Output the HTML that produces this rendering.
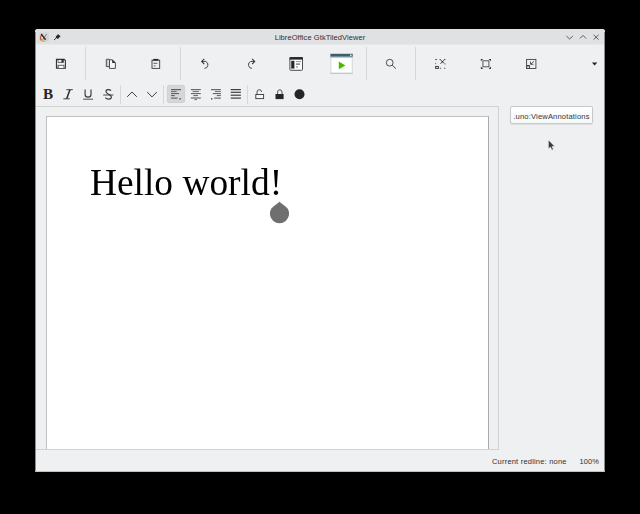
<!DOCTYPE html>
<html>
<head>
<meta charset="utf-8">
<title>LibreOffice GtkTiledViewer</title>
<style>
html,body{margin:0;padding:0;}
body{width:640px;height:514px;background:#000;position:relative;overflow:hidden;font-family:"Liberation Sans",sans-serif;}
.abs{position:absolute;}
#win{left:35px;top:29px;width:570px;height:443px;background:#eff0f1;border-radius:3px 3px 0 0;overflow:hidden;}
#title{left:0;top:0;width:570px;height:15px;background:#dfe1e3;}
#titlefade{left:0;top:15px;width:570px;height:1px;background:#e7e8ea;}
#ttext{left:0;width:570px;top:3px;text-align:center;font-size:7.5px;letter-spacing:0.08px;color:#2e3236;line-height:11px;white-space:nowrap;}
.sep{width:1px;background:#d5d7d9;}
#scrolltop{left:1px;top:77px;width:463px;height:1px;background:#d0d2d4;}
#scrollright{left:463px;top:77px;width:1px;height:344px;background:#d0d2d4;}
#scrollbot{left:1px;top:420px;width:463px;height:1px;background:#d0d2d4;}
#doc{left:11px;top:87px;width:443px;height:333px;background:#fff;border-left:1px solid #bdbfc1;border-top:1px solid #bdbfc1;border-right:1px solid #a9abad;box-sizing:border-box;}
#hello{left:55px;top:131.6px;font-family:"Liberation Serif",serif;font-size:37.4px;color:#000;line-height:44px;white-space:nowrap;will-change:transform;}
#bold{left:7.9px;top:57.2px;font-family:"Liberation Serif",serif;font-weight:bold;font-size:15.2px;line-height:16px;color:#25282b;}
#btn{left:475px;top:77px;width:83px;height:18px;border:1px solid #c6c8ca;border-radius:2px;background:linear-gradient(#ffffff,#f6f7f7);box-shadow:0 1px 1px rgba(0,0,0,0.08);box-sizing:border-box;font-size:7.6px;letter-spacing:0.15px;color:#33373b;text-align:center;line-height:19px;white-space:nowrap;}
#status span{position:absolute;font-size:7.5px;color:#2e3236;line-height:10px;white-space:nowrap;}
#leftedge{left:0;top:3px;width:1px;height:440px;background:#8d8e8f;}
#rightedge{left:569px;top:3px;width:1px;height:440px;background:#8d8e8f;}
#botedge{left:0;top:442px;width:570px;height:1px;background:#c0c1c2;}
#icons{position:absolute;left:0;top:0;width:640px;height:514px;}
</style>
</head>
<body>
<div id="win" class="abs">
  <div id="title" class="abs"></div>
  <div id="titlefade" class="abs"></div>
  <div id="ttext" class="abs">LibreOffice GtkTiledViewer</div>
  <div id="leftedge" class="abs"></div><div id="rightedge" class="abs"></div><div id="botedge" class="abs"></div>

  <div class="sep abs" style="left:50px;top:18px;height:33px;"></div>
  <div class="sep abs" style="left:145px;top:18px;height:33px;"></div>
  <div class="sep abs" style="left:331px;top:18px;height:33px;"></div>
  <div class="sep abs" style="left:380px;top:18px;height:33px;"></div>
  <div class="sep abs" style="left:85px;top:56px;height:19px;"></div>
  <div class="sep abs" style="left:128px;top:56px;height:19px;"></div>
  <div class="sep abs" style="left:212px;top:56px;height:19px;"></div>

  <div id="scrolltop" class="abs"></div>
  <div id="scrollright" class="abs"></div>
  <div id="scrollbot" class="abs"></div>
  <div id="doc" class="abs"></div>
  <div id="hello" class="abs">Hello world!</div>
  <div id="bold" class="abs">B</div>
  <div id="btn" class="abs">.uno:ViewAnnotations</div>
  <div id="status" class="abs" style="left:0;top:421px;width:570px;height:22px;">
    <span style="left:457px;top:7px;letter-spacing:0.2px;">Current redline: none</span>
    <span style="left:544.5px;top:7px;letter-spacing:0.12px;">100%</span>
  </div>
</div>
<svg id="icons" viewBox="0 0 640 514">
<!-- ICONS -->
<g fill="none" stroke="#363b40" stroke-width="0.9" stroke-linecap="butt" stroke-linejoin="miter">
<!-- title: X11 icon -->
<rect x="39.2" y="32.4" width="9.8" height="9.2" fill="#d3d8db" stroke="none"/>
<path d="M42.2 34.7 A3.6 3.6 0 0 0 41.4 40.3" stroke="#d9541e" stroke-width="1.3"/>
<path d="M41.4 40.3 A3.6 3.6 0 0 0 44.6 41.3" stroke="#e08a4a" stroke-width="1"/>
<path d="M46 34.8 A3.6 3.6 0 0 1 45.2 41.2" stroke="#e3cfa8" stroke-width="1"/>
<path d="M41.2 33.9 L45.6 39.8" stroke="#2e2e2e" stroke-width="1.5"/>
<path d="M46.6 34 L42.2 40.4" stroke="#4a4a4a" stroke-width="0.6"/>
<!-- pin -->
<path d="M58 33.9 L60.7 36.6 L59.6 37.1 L58.6 38.5 L57.1 38.7 L55.5 37.1 L56.2 36 L57.5 35.1 Z" fill="#25282b" stroke="none"/>
<path d="M56.4 37.8 L54 40" stroke="#25282b" stroke-width="0.9"/>
<!-- window buttons -->
<path d="M566.4 36.1 L569.6 39 L572.8 36.1" stroke="#3a3f44" stroke-width="0.8"/>
<path d="M579.9 38.5 L583 35.4 L586.1 38.5" stroke="#3a3f44" stroke-width="0.8"/>
<path d="M593.6 34.8 L598.7 39.6 M598.7 34.8 L593.6 39.6" stroke="#3a3f44" stroke-width="0.8"/>

<!-- save -->
<path d="M56.45 59.35 H64.2 L65.4 60.5 V68.25 H56.45 Z" stroke-width="1.1" stroke="#2f3438"/>
<path d="M58 59.6 V62.45 H63.6" stroke-width="0.8" stroke="#4a4f54"/>
<rect x="61.5" y="59.3" width="2.2" height="3.1" fill="#25282b" stroke="none"/>
<rect x="57.9" y="65.2" width="6.1" height="3.2" fill="#8a8d90" stroke="#4a4f54" stroke-width="0.7"/>
<rect x="58.9" y="65.9" width="4.5" height="2" fill="#fafafa" stroke="none"/>
<!-- copy -->
<path d="M109 66.6 H106.3 V59.3 H109.8" stroke-width="0.9"/>
<path d="M109.5 59.8 H112.4 L115.4 62.8 V68.4 H109.5 Z" stroke-width="0.9" fill="#f8f8f8"/>
<path d="M112.2 59.6 L115.6 63 H112.2 Z" fill="#2a2e32" stroke="none"/>
<path d="M107.8 60 V66" stroke="#b9bbbd" stroke-width="1.2"/>
<!-- paste -->
<rect x="152" y="60.2" width="7.7" height="8.2" stroke-width="0.9"/>
<rect x="153.2" y="58.9" width="5.2" height="1.7" fill="#25282b" stroke="none"/>
<path d="M153.4 63.3 H157.4" stroke-width="0.8"/>
<path d="M153.6 65.9 H155.8" stroke-width="0.9" stroke="#666b70"/>
<!-- undo -->
<path d="M201.9 61.45 H205.7 A3.6 3.6 0 0 1 204.47 68.38" stroke-width="0.95" stroke="#3a3f44"/>
<path d="M204.3 58.9 L201.7 61.45 L204.3 64.1" stroke-width="1.05" stroke="#2f3337"/>
<!-- redo -->
<path d="M254.5 61.45 H250.7 A3.6 3.6 0 0 0 251.93 68.38" stroke-width="0.95" stroke="#3a3f44"/>
<path d="M252.1 58.9 L254.7 61.45 L252.1 64.1" stroke-width="1.05" stroke="#2f3337"/>
<!-- template / sidebar -->
<rect x="289.9" y="57.5" width="12.6" height="12.8" rx="0.8" stroke-width="0.9" fill="#fbfbfb"/>
<rect x="289.6" y="57.2" width="13.2" height="2.4" fill="#25282b" stroke="none"/>
<rect x="291.2" y="60.8" width="3.2" height="7.8" fill="#25282b" stroke="none"/>
<path d="M296 61.6 H301" stroke-width="0.8" stroke="#7a7e82"/>
<path d="M296 64.1 H300" stroke-width="0.9" stroke="#2f3337"/>
<path d="M296 67 H298" stroke-width="0.8" stroke="#5a5f64"/>
<!-- run -->
<rect x="330.4" y="53.8" width="22.3" height="19.9" fill="#d3d8dc" stroke="none"/>
<rect x="331.4" y="57.4" width="20.3" height="15.4" fill="#ffffff" stroke="none"/>
<rect x="330.4" y="72.8" width="22.3" height="0.9" fill="#b4bcc3" stroke="none"/>
<rect x="330.4" y="53.8" width="22.3" height="2.8" fill="#4c5862" stroke="none"/>
<rect x="330.4" y="56.5" width="22.3" height="0.9" fill="#4d9dc6" stroke="none"/>
<rect x="350" y="54.6" width="1.6" height="1.3" fill="#f2f2f2" stroke="none"/>
<path d="M340.4 63.6 L346.8 67.2 L341.2 70.6 Z" fill="#f1f1f1" stroke="none"/>
<path d="M338.8 61.6 L345.3 65.4 L338.8 69.2 Z" fill="#4bb500" stroke="none"/>
<!-- search -->
<circle cx="389.7" cy="62.7" r="3.4" stroke-width="0.95" stroke="#42474c"/>
<path d="M392.2 65.2 L395.9 68.7" stroke-width="1" stroke="#42474c"/>
<!-- selection -->
<g stroke="#3a3f44" stroke-width="0.9">
<path d="M435.3 59.6 H436.9" stroke-width="1"/>
<path d="M440.6 59.9 L444.3 63.6 M444.3 59.9 L440.4 63.8" stroke-width="0.95"/>
<circle cx="442.4" cy="61.7" r="0.8" fill="#2f3337" stroke="none"/>
<path d="M439.6 59.5 H440.8 M444 59.5 H445.4" stroke-width="0.9"/>
<path d="M435.6 62.8 V64.2" stroke-width="0.9" stroke="#6a6e72"/>
<path d="M445.1 63.2 V64.8" stroke-width="0.9" stroke="#7a7e82"/>
<rect x="435.6" y="66.4" width="2.8" height="2" stroke-width="0.9" fill="#d9dadc" stroke="#33383d"/>
<path d="M439.8 68.3 H441.2 M444 68.2 H445.4" stroke-width="0.9" stroke="#4a4f54"/>
</g>
<!-- fullscreen -->
<rect x="482.9" y="60.8" width="6" height="6" stroke-width="0.95" stroke="#4a4f54"/>
<g fill="#33383d" stroke="none">
<path d="M480.8 58.9 H483.2 L480.8 61.3 Z"/>
<path d="M491 58.9 H488.6 L491 61.3 Z"/>
<path d="M480.8 68.9 H483.2 L480.8 66.5 Z"/>
<path d="M491 68.9 H488.6 L491 66.5 Z"/>
</g>
<!-- pip -->
<rect x="526.6" y="59.4" width="9.3" height="9.1" stroke-width="0.9" stroke="#3d4247"/>
<rect x="526.7" y="65.8" width="2.8" height="2.6" stroke-width="0.9" fill="#e8e9ea"/>
<path d="M526.4 65.6 H529.8" stroke-width="1"/>
<path d="M534 61.2 L531 64" stroke-width="0.8"/>
<path d="M530.6 61.6 V64.3 H533.4" stroke-width="0.9"/>
<!-- dropdown -->
<path d="M591.9 62.6 H597.3 L594.6 65.6 Z" fill="#232629" stroke="none"/>

<!-- toolbar 2 -->
<!-- Italic -->
<path d="M66.4 89.7 H72.8 M63.4 98.8 H69.8" stroke-width="0.9" stroke="#2a2e32"/>
<path d="M69.9 89.8 L66.7 98.8" stroke-width="1.5" stroke="#2a2e32"/>
<!-- Underline -->
<path d="M85.1 89.6 V94.4 A2.95 2.7 0 0 0 91 94.4 V89.6" stroke-width="1.15" stroke="#363b40"/>
<path d="M83.2 99.2 H93" stroke-width="0.9" stroke="#363b40"/>
<!-- Strike -->
<path d="M111 90.7 C109.6 89 105.8 89.2 106 91.7 C106.2 94.2 111.4 94.3 111.4 97 C111.4 99.7 106.8 99.7 105.4 97.7" stroke-width="1.15" stroke="#363b40"/>
<path d="M103.2 95 H113.4" stroke-width="0.85" stroke="#2a2e32"/>
<!-- chevrons -->
<path d="M127.2 96.8 L132 92 L136.8 96.8" stroke-width="1" stroke="#3a3f44"/>
<path d="M147.2 92.1 L152 96.9 L156.8 92.1" stroke-width="1" stroke="#3a3f44"/>
<!-- active button bg -->
<rect x="167.4" y="85.4" width="17.2" height="17.2" rx="1.6" fill="#d4d6d8" stroke="#c9cbcd" stroke-width="0.8"/>
<!-- align left -->
<g stroke="#33383d" stroke-width="0.9">
<path d="M171 89.7 H181"/>
<path d="M171 91.6 H176.6" stroke="#5d6166"/>
<path d="M171 93.6 H179" stroke="#5d6166" stroke-width="1.1"/>
<path d="M171 95.6 H174.8" stroke="#4a4f54"/>
<path d="M171 98.1 H177.6" stroke="#4a4f54" stroke-width="1"/>
<path d="M179.4 98.9 H180.8" stroke-width="1.1"/>
</g>
<!-- center -->
<g stroke="#33383d" stroke-width="0.9">
<path d="M190.9 89.7 H200.8"/>
<path d="M192.6 91.6 H198.9" stroke="#5d6166"/>
<path d="M190.9 93.6 H200.8" stroke="#5d6166" stroke-width="1.1"/>
<path d="M193.4 95.6 H198" stroke="#4a4f54"/>
<path d="M190.9 98 H200.8" stroke="#4a4f54" stroke-width="1"/>
<path d="M194.4 99.6 H197" stroke="#5d6166" stroke-width="0.9"/>
</g>
<!-- right -->
<g stroke="#33383d" stroke-width="0.9">
<path d="M211 89.7 H220.9"/>
<path d="M215 91.6 H220.9" stroke="#5d6166"/>
<path d="M212.8 93.6 H220.9" stroke="#5d6166" stroke-width="1.1"/>
<path d="M216.8 95.6 H220.9" stroke="#4a4f54"/>
<path d="M214.2 98.1 H220.9" stroke="#4a4f54" stroke-width="1"/>
<path d="M211 98.9 H212.4" stroke-width="1.1"/>
</g>
<!-- justify -->
<g stroke="#3a3f44" stroke-width="1.2">
<path d="M230.7 89.6 H240.9"/>
<path d="M230.7 92.3 H240.9"/>
<path d="M230.7 95.2 H240.9"/>
<path d="M230.7 98.1 H240.9"/>
</g>
<!-- unlocked -->
<rect x="255.8" y="94.5" width="7.8" height="4.1" stroke-width="0.95" stroke="#3d4247" fill="#f7f7f7"/>
<path d="M257 94.2 V92 A2.3 2.3 0 0 1 261.6 92" stroke-width="0.9" stroke="#3d4247"/>
<!-- locked -->
<rect x="275.5" y="94" width="8.1" height="5.1" fill="#232629" stroke="none"/>
<path d="M277.6 94.2 V92 A2.2 2.2 0 0 1 282 92 V94.2" stroke-width="0.9" stroke="#3d4247"/>
<!-- circle -->
<circle cx="299.5" cy="94.2" r="5" fill="#232629" stroke="none"/>

<!-- drop handle -->
<path d="M279.5 201.8 C282 204 286 206.4 287.8 208.8 A9.6 9.6 0 1 1 271.2 208.8 C273 206.4 277 204 279.5 201.8 Z" fill="#6f6f6f" stroke="none"/>
<!-- cursor -->
<path d="M548.4 139.9 L548.4 148.8 L550.5 147.1 L551.9 150.1 L553.4 149.4 L552 146.5 L554.6 146.2 Z" fill="#3a3a3a" stroke="#f4f4f4" stroke-width="0.5" stroke-linejoin="round"/>
</g>
</svg>
</body>
</html>
